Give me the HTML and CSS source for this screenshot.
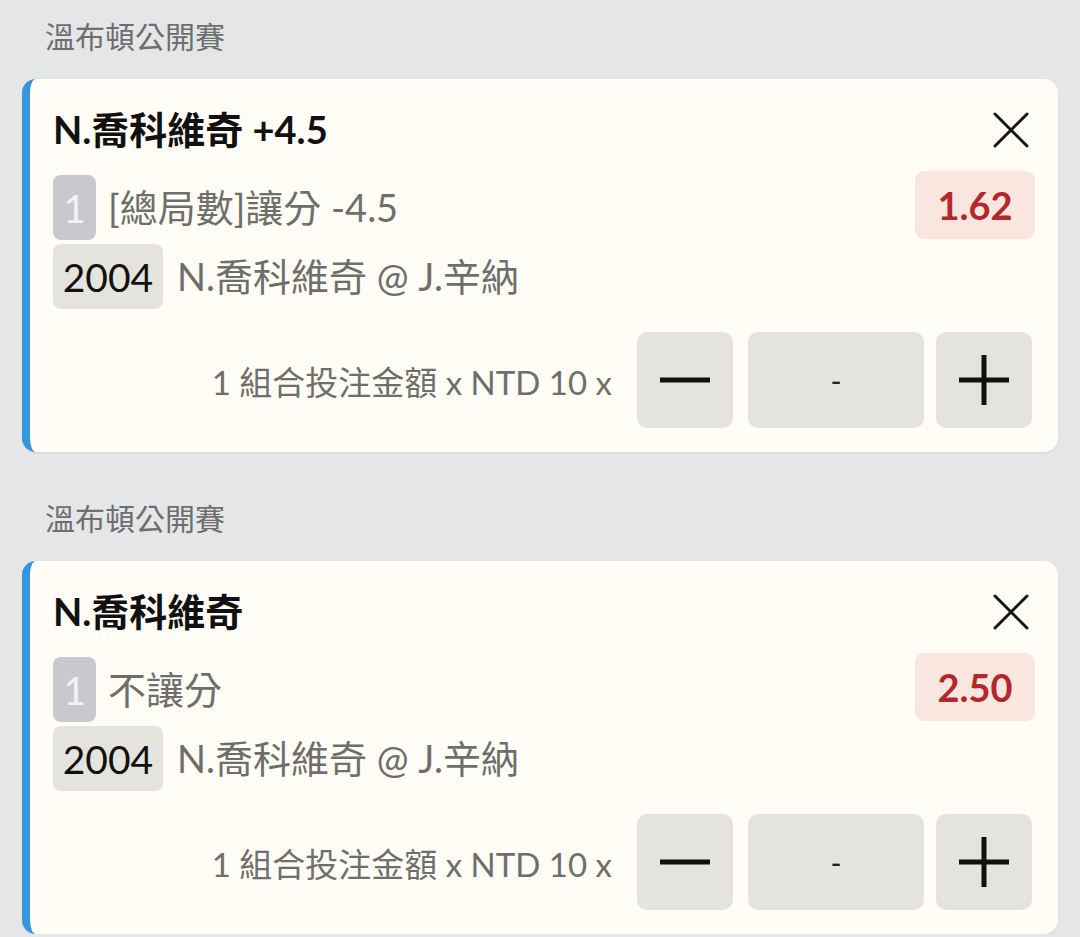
FILE: index.html
```html
<!DOCTYPE html>
<html lang="zh-Hant">
	<head>
		<meta charset="UTF-8">
		<link rel="stylesheet" href="styles.css">
		<title>投注單</title>
	</head>
	<body>
		<div class="slip">
			<div class="section">
				<div class="league">溫布頓公開賽</div>
				<div class="card">
					<div class="title-row">
						<span class="title">N.喬科維奇 +4.5</span>
						<span class="close">
							<svg width="36" height="36" viewBox="0 0 36 36"><path d="M2 2 L34 34 M34 2 L2 34" stroke="#151515" stroke-width="3" stroke-linecap="round"/></svg>
						</span>
					</div>
					<div class="line">
						<span class="badge badge-num">1</span>
						<span class="market">[總局數]讓分 -4.5</span>
						<span class="odds">1.62</span>
					</div>
					<div class="line">
						<span class="badge badge-code">2004</span>
						<span class="market">N.喬科維奇 @ J.辛納</span>
					</div>
					<div class="stake">
						<span class="stake-label">1 組合投注金額 x NTD 10 x</span>
						<div class="step">
							<svg width="50" height="6" viewBox="0 0 50 6"><rect x="0" y="0.5" width="50" height="5" fill="#111"/></svg>
						</div>
						<div class="amount">-</div>
						<div class="step">
							<svg width="50" height="50" viewBox="0 0 50 50"><rect x="0" y="22.5" width="50" height="5" fill="#111"/><rect x="22.5" y="0" width="5" height="50" fill="#111"/></svg>
						</div>
					</div>
				</div>
			</div>
			<div class="section">
				<div class="league">溫布頓公開賽</div>
				<div class="card">
					<div class="title-row">
						<span class="title">N.喬科維奇</span>
						<span class="close">
							<svg width="36" height="36" viewBox="0 0 36 36"><path d="M2 2 L34 34 M34 2 L2 34" stroke="#151515" stroke-width="3" stroke-linecap="round"/></svg>
						</span>
					</div>
					<div class="line">
						<span class="badge badge-num">1</span>
						<span class="market">不讓分</span>
						<span class="odds">2.50</span>
					</div>
					<div class="line">
						<span class="badge badge-code">2004</span>
						<span class="market">N.喬科維奇 @ J.辛納</span>
					</div>
					<div class="stake">
						<span class="stake-label">1 組合投注金額 x NTD 10 x</span>
						<div class="step">
							<svg width="50" height="6" viewBox="0 0 50 6"><rect x="0" y="0.5" width="50" height="5" fill="#111"/></svg>
						</div>
						<div class="amount">-</div>
						<div class="step">
							<svg width="50" height="50" viewBox="0 0 50 50"><rect x="0" y="22.5" width="50" height="5" fill="#111"/><rect x="22.5" y="0" width="5" height="50" fill="#111"/></svg>
						</div>
					</div>
				</div>
			</div>
		</div>
	</body>
</html>
```

FILE: styles.css
```css
body {
	margin: 0;
	background: #e5e6e8;
	font-family: Lato, "Noto Sans CJK TC", sans-serif;
}
.slip {
	display: flex;
	flex-direction: column;
	gap: 30px;
	padding: 0 22px;
}
.section {
	padding-top: 16px;
}
.league {
	height: 40px;
	line-height: 40px;
	padding-left: 23px;
	margin-bottom: 23px;
	font-size: 30px;
	color: #6e6e6e;
}
.card {
	display: flex;
	flex-direction: column;
	padding: 24px 23px 24px 23px;
	border-left: 8px solid #3796dc;
	border-radius: 14px;
	background: #fffdf5;
	box-shadow: 0 1px 2px rgba(0, 0, 0, 0.08);
}
.title-row {
	display: flex;
	justify-content: space-between;
	align-items: center;
	height: 54px;
	margin-bottom: 18px;
}
.title {
	padding-bottom: 5px;
	font-size: 38px;
	font-weight: bold;
	color: #111;
}
.close {
	display: flex;
	margin-right: 6px;
}
.line {
	display: flex;
	align-items: center;
	height: 65px;
	margin-bottom: 4px;
}
.badge {
	display: flex;
	align-items: center;
	justify-content: center;
	height: 65px;
	border-radius: 8px;
	font-size: 39px;
}
.badge-num {
	width: 43px;
	background: #c8c8ce;
	color: #f2f2f2;
	margin-right: 12px;
}
.badge-code {
	width: 110px;
	background: #e5e3dd;
	color: #111;
	margin-right: 14px;
}
.market {
	flex: 1;
	padding-bottom: 4px;
	font-size: 38px;
	color: #6e6e6a;
}
.odds {
	display: flex;
	align-items: center;
	justify-content: center;
	width: 120px;
	height: 68px;
	margin-top: -6px;
	border-radius: 9px;
	background: #f8e6df;
	color: #b3282a;
	font-size: 38px;
	font-weight: bold;
}
.stake {
	display: flex;
	justify-content: flex-end;
	align-items: center;
	margin-top: 19px;
	margin-right: 3px;
}
.stake-label {
	margin-right: 25px;
	padding-top: 2px;
	font-size: 33px;
	color: #6e6e6a;
}
.step, .amount {
	display: flex;
	align-items: center;
	justify-content: center;
	height: 96px;
	border-radius: 10px;
	background: #e5e3dd;
}
.step {
	width: 96px;
}
.amount {
	width: 176px;
	margin: 0 12px 0 15px;
	font-size: 30px;
	color: #222;
}
```
